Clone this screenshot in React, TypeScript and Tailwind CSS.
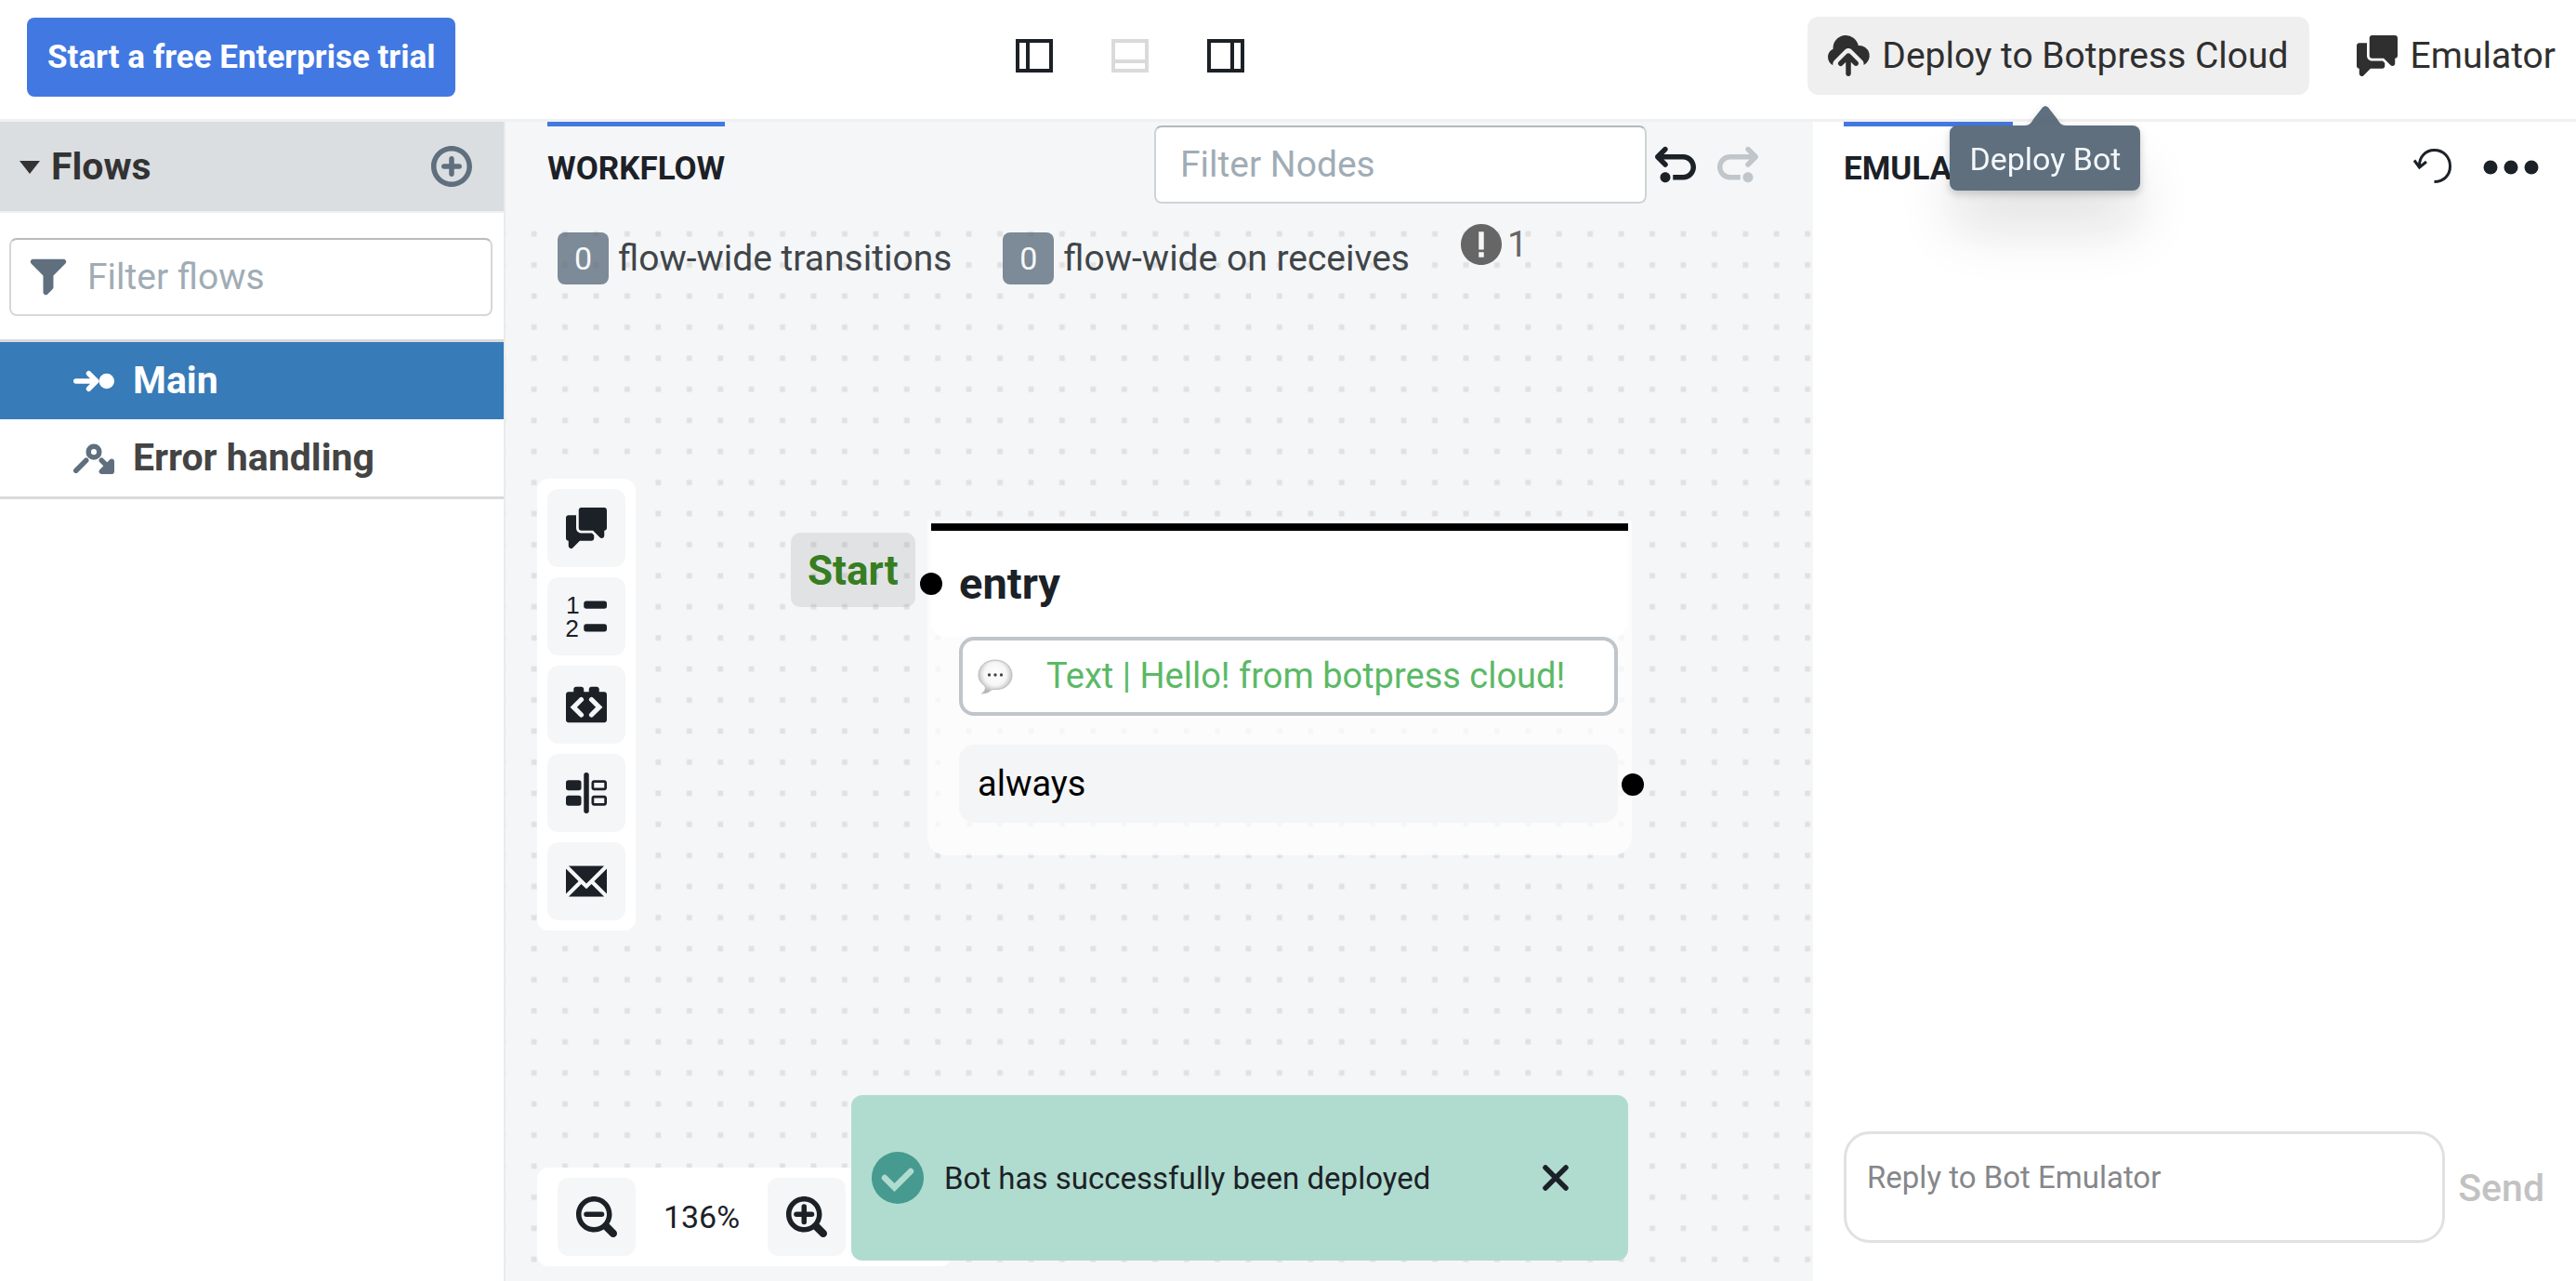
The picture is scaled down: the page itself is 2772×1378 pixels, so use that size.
import React from "react";

type IconProps = { className?: string; children: React.ReactNode };

function Icon({ className = "size-11", children }: IconProps) {
  return (
    <svg viewBox="0 0 16 16" fill="currentColor" aria-hidden="true" className={`shrink-0 overflow-visible ${className}`}>
      {children}
    </svg>
  );
}

const ChatIcon = () => (
  <Icon>
    <path d="M6 10c-1.1 0-2-.9-2-2V3H1c-.55 0-1 .45-1 1v8c0 .55.45 1 1 1v2a1.003 1.003 0 001.71.71L5.41 13H10c.55 0 1-.45 1-1v-1.17l-.83-.83H6zm9-10H6c-.55 0-1 .45-1 1v7c0 .55.45 1 1 1h4.59l2.71 2.71c.17.18.42.29.7.29.55 0 1-.45 1-1V9c.55 0 1-.45 1-1V1c0-.55-.45-1-1-1z" />
  </Icon>
);

const CloudUploadIcon = () => (
  <Icon>
    <path d="M8.71 7.29C8.53 7.11 8.28 7 8 7s-.53.11-.71.29l-3 3a1.003 1.003 0 001.42 1.42L7 10.41V15c0 .55.45 1 1 1s1-.45 1-1v-4.59l1.29 1.29c.18.19.43.3.71.3a1.003 1.003 0 00.71-1.71l-3-3z" />
    <path d="M12 4c-.03 0-.07 0-.1.01A5 5 0 002 5c0 .11.01.22.02.33A3.51 3.51 0 000 8.5c0 1.3.7 2.5 1.9 3.2 0-.9.2-1.5.7-2l3.98-4C6.95 5.31 7.45 5.100 8 5.100s1.05.21 1.41.6l4 4c.5.5.7 1.100.6 1.900A4 4 0 0012 4z" />
  </Icon>
);

const FilterIcon = () => (
  <Icon>
    <path d="M13.99.99h-12a1.003 1.003 0 00-.71 1.71l4.71 4.71V14a1.003 1.003 0 001.71.71l2-2c.18-.18.29-.43.29-.71V7.41L14.7 2.7a1.003 1.003 0 00-.71-1.71z" />
  </Icon>
);

const AddIcon = () => (
  <Icon>
    <path d="M10.99 6.99h-2v-2c0-.55-.45-1-1-1s-1 .45-1 1v2h-2c-.55 0-1 .45-1 1s.45 1 1 1h2v2c0 .55.45 1 1 1s1-.45 1-1v-2h2c.55 0 1-.45 1-1s-.45-1-1-1zm-3-7c-4.42 0-8 3.58-8 8s3.58 8 8 8 8-3.58 8-8-3.58-8-8-8zm0 14c-3.31 0-6-2.69-6-6s2.69-6 6-6 6 2.69 6 6-2.69 6-6 6z" />
  </Icon>
);

const UNDO =
  "M4 11c-1.1 0-2 .9-2 2s.9 2 2 2 2-.9 2-2-.9-2-2-2zm7-7H3.41L4.7 2.71c.19-.18.3-.43.3-.71a1.003 1.003 0 00-1.71-.71l-3 3C.11 4.47 0 4.72 0 5c0 .28.11.53.29.71l3 3a1.003 1.003 0 001.42-1.42L3.41 6H11c1.66 0 3 1.34 3 3s-1.34 3-3 3H7v2h4c2.76 0 5-2.24 5-5s-2.24-5-5-5z";

const UndoIcon = () => (
  <Icon>
    <path d={UNDO} />
  </Icon>
);

const RedoIcon = () => (
  <Icon>
    <g transform="matrix(-1 0 0 1 16 0)">
      <path d={UNDO} />
    </g>
  </Icon>
);

const ZoomIcon = ({ plus }: { plus?: boolean }) => (
  <Icon>
    <path d="M15.56 13.44l-2.67-2.67C13.59 9.68 14 8.39 14 7c0-3.87-3.13-7-7-7S0 3.13 0 7s3.13 7 7 7c1.39 0 2.68-.41 3.77-1.11l2.67 2.67a1.498 1.498 0 102.12-2.12zM7 12c-2.76 0-5-2.24-5-5s2.24-5 5-5 5 2.24 5 5-2.24 5-5 5z" />
    <rect x="3" y="6" width="8" height="2" rx="1" />
    {plus && <rect x="6" y="3" width="2" height="8" rx="1" />}
  </Icon>
);

const NumberedListIcon = () => (
  <Icon>
    <text x="0" y="7" fontSize="9.6" fontFamily="Liberation Sans, sans-serif">1</text>
    <text x="-0.3" y="16" fontSize="9.6" fontFamily="Liberation Sans, sans-serif">2</text>
    <rect x="7" y="2" width="9" height="3" rx="1" />
    <rect x="7" y="11" width="9" height="3" rx="1" />
  </Icon>
);

const CodeBlockIcon = () => (
  <Icon>
    <path d="M15 3h-2V2c0-.55-.45-1-1-1h-2c-.55 0-1 .45-1 1v1H7V2c0-.55-.45-1-1-1H4c-.55 0-1 .45-1 1v1H1c-.55 0-1 .45-1 1v10c0 .55.45 1 1 1h14c.55 0 1-.45 1-1V4c0-.55-.45-1-1-1z" />
    <path d="M6 6L3 9l3 3M10 6l3 3-3 3" fill="none" stroke="#f5f6f8" strokeWidth="1.9" strokeLinecap="round" />
  </Icon>
);

const SplitIcon = () => (
  <Icon>
    <rect x="7" y="0" width="2" height="16" rx="1" />
    <rect x="0" y="3" width="6" height="4" rx="1" />
    <rect x="0" y="9" width="6" height="4" rx="1" />
    <path d="M15 3h-4c-.55 0-1 .45-1 1v2c0 .55.45 1 1 1h4c.55 0 1-.45 1-1V4c0-.55-.45-1-1-1zm0 3h-4V4h4v2zm0 3h-4c-.55 0-1 .45-1 1v2c0 .55.45 1 1 1h4c.55 0 1-.45 1-1v-2c0-.55-.45-1-1-1zm0 3h-4v-2h4v2z" />
  </Icon>
);

const EnvelopeIcon = () => (
  <Icon>
    <path d="M0 3.06v9.88L4.94 8 0 3.06zM14.94 2H1.06L8 8.94 14.94 2zM11.06 8L16 12.94V3.06L11.06 8zM10 9.06L8 11 6 9.06 1.06 14h13.88L10 9.06z" />
  </Icon>
);

const FlowLinearIcon = () => (
  <Icon>
    <circle cx="13" cy="8" r="3" />
    <path d="M1 8h7.6M6 5l3 3-3 3" fill="none" stroke="currentColor" strokeWidth="2" strokeLinecap="round" strokeLinejoin="round" />
  </Icon>
);

const FlowReviewIcon = () => (
  <Icon>
    <circle cx="8" cy="5.5" r="2.1" fill="none" stroke="currentColor" strokeWidth="2" />
    <path d="M1 12.8l4-4M11 8.8l3 3" fill="none" stroke="currentColor" strokeWidth="2" strokeLinecap="round" />
    <path d="M15 8.2c.55 0 1 .45 1 1v4c0 .55-.45 1-1 1h-4a1.003 1.003 0 01-.71-1.71l4-4c.18-.18.43-.29.71-.29z" />
  </Icon>
);

const PanelIcon = ({ side }: { side: "left" | "bottom" | "right" }) => (
  <svg viewBox="0 0 40 38" className="h-[38px] w-10" fill="none" stroke="currentColor" strokeWidth="4" aria-hidden="true">
    <rect x="2" y="3" width="36" height="32" />
    {side === "left" && <path d="M13 3v32" />}
    {side === "right" && <path d="M27 3v32" />}
    {side === "bottom" && <path d="M2 25h36" />}
  </svg>
);

const BubbleIcon = () => (
  <svg viewBox="0 0 38 40" className="h-10 w-[38px] shrink-0" aria-hidden="true">
    <defs>
      <radialGradient id="bubble" cx="0.5" cy="0.42" r="0.56">
        <stop offset="0" stopColor="#ffffff" />
        <stop offset="0.6" stopColor="#f6f6f6" />
        <stop offset="1" stopColor="#b4b4b4" />
      </radialGradient>
    </defs>
    <path
      d="M19 2C9 2 1 8.500 1 18c0 5 2.500 9 7 12 1 3 0 5.500-3.500 8 5 0 8.500-2 11-4.500h5C30 33.500 37 27 37 18S29 2 19 2z"
      fill="url(#bubble)"
      stroke="#bdbdbd"
      strokeWidth="1"
    />
    <circle cx="12.500" cy="18" r="1.7" fill="#444" />
    <circle cx="19" cy="18" r="1.7" fill="#444" />
    <circle cx="25.500" cy="18" r="1.7" fill="#444" />
  </svg>
);

const nodeTools = [
  { label: "Say something", icon: <ChatIcon /> },
  { label: "Single choice", icon: <NumberedListIcon /> },
  { label: "Execute code", icon: <CodeBlockIcon /> },
  { label: "Split", icon: <SplitIcon /> },
  { label: "Send email", icon: <EnvelopeIcon /> },
];

const squareButton = "flex size-[84px] items-center justify-center rounded-xl bg-[#f5f6f8]";

function Header() {
  return (
    <header className="relative z-20 grid h-[131px] shrink-0 grid-cols-[1fr_auto_1fr] items-start border-b-[3px] border-[#f0f0f0] bg-white pt-[18px]">
      <div className="pl-[29px]">
        <button className="mt-px h-[85px] rounded-lg bg-[#4278e2] px-[22px] pt-0.5 text-[35px] font-bold text-white">
          Start a free Enterprise trial
        </button>
      </div>
      <div className="flex h-[84px] items-center gap-[63px] pr-[340px] text-[#1c2127]">
        <button aria-label="Toggle left panel"><PanelIcon side="left" /></button>
        <button aria-label="Toggle bottom panel" className="text-[#dadada]"><PanelIcon side="bottom" /></button>
        <button aria-label="Toggle right panel"><PanelIcon side="right" /></button>
      </div>
      <div className="flex justify-end gap-10 pr-[22px] text-[39px] text-[#2f2f2f]">
        <div className="relative">
          <button className="flex h-[84px] items-center gap-3.5 rounded-xl bg-[#efefef] px-[22px] whitespace-nowrap" aria-describedby="deploy-tip">
            <CloudUploadIcon />
            Deploy to Botpress Cloud
          </button>
          <div className="absolute top-full right-7 left-0 flex flex-col items-center pt-3 drop-shadow-[0_4px_4px_rgba(16,22,26,0.2)]">
            <svg viewBox="0 0 44 21" className="h-[21px] w-11 text-[#5f6f7e]" fill="currentColor" aria-hidden="true">
              <path d="M0 21c6 0 7-4 10-8l9-11.500c2-2 4-2 6 0L34 13c3 4 4 8 10 8z" />
            </svg>
            <div
              id="deploy-tip"
              role="tooltip"
              className="flex h-[70px] items-center rounded-lg bg-[#5f6f7e] px-[21px] pt-0.5 text-[34px] whitespace-nowrap text-[#f5f8fa] shadow-[0_44px_60px_rgba(16,22,26,0.1)]"
            >
              Deploy Bot
            </div>
          </div>
        </div>
        <button className="flex h-[84px] items-center gap-3.5 pl-[11px]">
          <ChatIcon />
          Emulator
        </button>
      </div>
    </header>
  );
}

function Sidebar() {
  return (
    <aside className="w-[544px] shrink-0 border-r-2 border-[#ebebec] bg-white text-[41px]">
      <div className="flex h-[98px] items-center border-b-2 border-[#f0f0f0] bg-[#dadee1] pr-[34px] pl-[21px]">
        <button className="flex items-center gap-3 pt-0.5 font-bold text-[#333]">
          <svg viewBox="0 0 22 14" className="h-3.5 w-[22px]" fill="currentColor" aria-hidden="true">
            <path d="M0 0h22L11 14z" />
          </svg>
          Flows
        </button>
        <button aria-label="Add flow" className="ml-auto text-[#5f6f7e]"><AddIcon /></button>
      </div>
      <div className="pt-[27px] pr-3 pb-[25px] pl-2.5">
        <label className="flex h-[84px] items-center gap-5 rounded-lg border-2 border-[#d5d7d9] border-t-[#b9bbbd] pl-[18px] text-[#5f6f7e]">
          <FilterIcon />
          <input
            aria-label="Filter flows"
            placeholder="Filter flows"
            className="min-w-0 flex-1 bg-transparent text-[39px] outline-none placeholder:text-[#a0acb5]"
          />
        </label>
      </div>
      <ul className="border-y-[3px] border-[#d8dadb] font-bold">
        <li>
          <button className="flex h-[83px] w-full items-center gap-5 bg-[#377bb8] pl-[79px] text-white">
            <FlowLinearIcon />
            Main
          </button>
        </li>
        <li>
          <button className="flex h-[83px] w-full items-center gap-5 pl-[79px] text-[#444]">
            <span className="flex text-[#5f6f7e]"><FlowReviewIcon /></span>
            Error handling
          </button>
        </li>
      </ul>
    </aside>
  );
}

function PanelTab({ children }: { children: string }) {
  return (
    <button className="flex h-[98px] items-center border-t-[5px] border-[#4278e2] pb-px text-[35px] font-bold text-[#1c2127]">
      {children}
    </button>
  );
}

function CountBadge({ children }: { children: string }) {
  return (
    <span className="flex h-14 w-[55px] items-center justify-center rounded-lg bg-[#5f6f7e]/80 text-[34px] text-[#f5f8fa]">
      {children}
    </span>
  );
}

function Canvas() {
  return (
    <div className="relative flex-1 overflow-hidden">
      <svg className="absolute inset-0 size-full" aria-hidden="true">
        <defs>
          <pattern id="dots" width="24" height="24" patternUnits="userSpaceOnUse" patternTransform="translate(14.5 6.5) scale(1.3928)">
            <rect x="9.500" y="9.500" width="4.200" height="4.200" fill="#e1e1e1" />
          </pattern>
        </defs>
        <rect width="100%" height="100%" fill="url(#dots)" />
      </svg>

      <div className="relative flex items-start gap-[55px] pt-3 pl-14 text-[39px] text-[#404548]">
        <div className="flex items-center gap-2.5 pt-[9px]">
          <CountBadge>0</CountBadge>
          <span className="leading-[56px]">flow-wide transitions</span>
        </div>
        <div className="flex items-center gap-2.5 pt-[9px]">
          <CountBadge>0</CountBadge>
          <span className="leading-[56px]">flow-wide on receives</span>
        </div>
        <button className="flex items-center gap-1.5 leading-[44px] text-[#666]" aria-label="1 problem">
          <Icon>
            <path d="M8 0C3.580 0 0 3.580 0 8s3.580 8 8 8 8-3.580 8-8-3.580-8-8-8zm1 13H7v-2h2v2zm0-3H7V3h2v7z" />
          </Icon>
          1
        </button>
      </div>

      <div className="absolute top-[286px] left-[34px] flex flex-col gap-[11px] rounded-xl bg-white p-[11px] text-[#1c2127]">
        {nodeTools.map((tool) => (
          <button key={tool.label} aria-label={tool.label} className={squareButton}>
            {tool.icon}
          </button>
        ))}
      </div>

      <div className="absolute top-[344px] left-[307px] flex h-20 items-center rounded-[10px] bg-black/8 px-[18px] pt-0.5 text-[44px] font-bold text-[#377d22]">
        Start
      </div>

      <section className="absolute top-[331px] left-[454px] w-[758px] rounded-b-[20px] bg-white/70 px-1 pt-[3px] pb-[35px]">
        <div className="relative rounded-b-2xl border-t-8 border-black bg-white">
          <h2 className="flex h-[114px] items-center py-4 pl-[30px] text-[47px] font-bold text-[#1c2127]">entry</h2>
          <span className="absolute top-[45px] -left-3 size-6 rounded-full bg-black" />
        </div>
        <div className="pr-[11px] pl-[30px] text-[38px]">
          <button className="flex h-[85px] w-full items-center gap-9 rounded-2xl border-4 border-[#bfc5ca] bg-white px-4 whitespace-nowrap text-[#5bb966]">
            <BubbleIcon />
            Text | Hello! from botpress cloud!
          </button>
          <div className="mt-[31px] flex h-[84px] items-center rounded-2xl bg-[#f4f5f7] pl-5 text-black">always</div>
        </div>
        <span className="absolute right-[-13px] bottom-[64px] size-6 rounded-full bg-black" />
      </section>

      <div className="absolute bottom-4 left-[34px] flex w-[446px] items-center rounded-xl bg-white py-[11px] pl-[22px] text-[#1c2127]">
        <button aria-label="Zoom out" className={squareButton}><ZoomIcon /></button>
        <span className="w-[142px] text-center text-[34px]">136%</span>
        <button aria-label="Zoom in" className={squareButton}><ZoomIcon plus /></button>
      </div>

      <div
        role="status"
        className="absolute bottom-[22px] left-[372px] flex h-[178px] w-[836px] items-center rounded-xl bg-[#b0dccf] pr-16 pl-[22px] text-[33px] text-[#1c2127]"
      >
        <svg viewBox="0 0 56 56" className="size-14" aria-hidden="true">
          <circle cx="28" cy="28" r="28" fill="#469a90" />
          <path d="M14 28l10.500 10.500L42 21" fill="none" stroke="#b0dccf" strokeWidth="6.500" strokeLinecap="round" />
        </svg>
        <span className="pt-0.5 pl-[22px]">Bot has successfully been deployed</span>
        <button aria-label="Dismiss" className="ml-auto">
          <svg viewBox="0 0 28 28" className="size-7" fill="none" stroke="currentColor" strokeWidth="5.500" strokeLinecap="round" aria-hidden="true">
            <path d="M3 3l22 22M25 3L3 25" />
          </svg>
        </button>
      </div>
    </div>
  );
}

function Workflow() {
  return (
    <main className="flex min-w-0 flex-1 flex-col bg-[#f5f6f8]">
      <div className="flex h-[98px] shrink-0 items-start pr-[59px] pl-[45px]">
        <PanelTab>WORKFLOW</PanelTab>
        <input
          aria-label="Filter Nodes"
          placeholder="Filter Nodes"
          className="mt-1 ml-auto h-[84px] w-[530px] rounded-lg border-2 border-[#d0d3d5] border-t-[#b5b8ba] bg-white pl-[26px] text-[39px] outline-none placeholder:text-[#a0acb5]"
        />
        <div className="flex h-[92px] items-center gap-[23px] pl-[9px]">
          <button aria-label="Undo" className="text-[#1c2127]"><UndoIcon /></button>
          <button aria-label="Redo" className="text-[#c1c6ca]"><RedoIcon /></button>
        </div>
      </div>
      <Canvas />
    </main>
  );
}

function Emulator() {
  return (
    <section className="flex w-[821px] shrink-0 flex-col bg-white pr-[34px] pl-[33px]">
      <div className="flex h-[98px] items-start text-[#1c2127]">
        <PanelTab>EMULATOR</PanelTab>
        <div className="ml-auto flex h-[98px] items-center gap-[33px] pr-1.5">
          <button aria-label="Restart conversation" className="pb-1">
            <svg viewBox="0 0 42 40" className="h-10 w-[42px]" fill="none" stroke="currentColor" strokeWidth="3" aria-hidden="true">
              <path d="M6.500 21C6 11 13 3.500 22.500 3.500c10 0 17 7.500 17 17.500 0 9.500-7 16.500-17 16.500M1 14.500l5.500 7.500 7.500-6" />
            </svg>
          </button>
          <button aria-label="More options">
            <svg viewBox="0 0 60 16" className="h-4 w-[60px]" fill="currentColor" aria-hidden="true">
              <circle cx="8" cy="8" r="7.500" />
              <circle cx="30" cy="8" r="7.500" />
              <circle cx="52" cy="8" r="7.500" />
            </svg>
          </button>
        </div>
      </div>
      <form className="mt-auto mb-[41px] flex items-center gap-3.5">
        <textarea
          aria-label="Reply to Bot Emulator"
          placeholder="Reply to Bot Emulator"
          className="h-[120px] min-w-0 flex-1 resize-none rounded-[28px] border-[3px] border-[#e1e1e1] px-[22px] pt-6 text-[33px] leading-[46px] outline-none placeholder:text-[#85878a]"
        />
        <button type="button" disabled className="pt-1 text-[41px] font-medium text-[#c2c2c2]">Send</button>
      </form>
    </section>
  );
}

export default function App() {
  return (
    <div className="flex h-screen min-w-[2200px] flex-col overflow-hidden bg-white font-['Roboto',sans-serif]">
      <Header />
      <div className="flex min-h-0 flex-1">
        <Sidebar />
        <Workflow />
        <Emulator />
      </div>
    </div>
  );
}
